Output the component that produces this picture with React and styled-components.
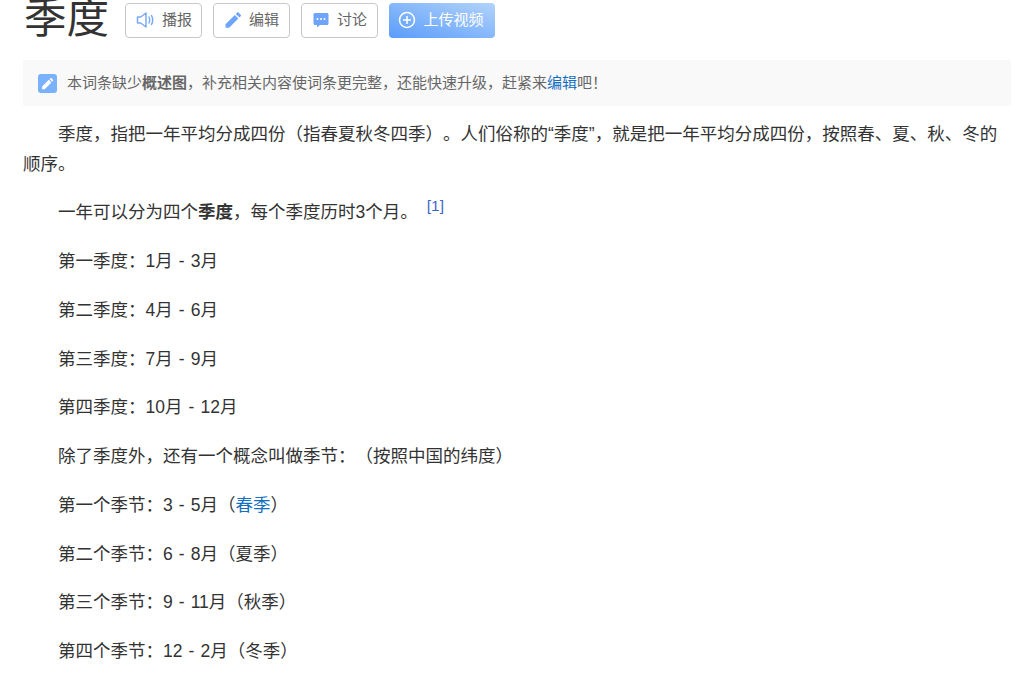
import styled, { createGlobalStyle } from "styled-components"

const GlobalStyle = createGlobalStyle`
  html, body {
    margin: 0;
    background: #fff;
    overflow: hidden;
  }
  body {
    font-family: "Liberation Sans", "Noto Sans CJK SC", sans-serif;
    color: #333;
    text-spacing-trim: space-all;
  }
`

const SpeakerIcon = () => (
  <svg width="20" height="20" viewBox="0 0 20 20" fill="none" stroke="#7aa9f5" strokeWidth="1.5">
    <path d="M2.5 7h3.2L11 3v14l-5.300-4H2.500z" strokeLinejoin="round" />
    <path d="M14 7c1 1.800 1 4.200 0 6" strokeLinecap="round" />
    <path d="M16.500 5.500c1.500 2.800 1.500 6.200 0 9" strokeLinecap="round" />
  </svg>
)

const PencilIcon = ({ color = "#6ea4fa" }) => (
  <svg width="18" height="18" viewBox="0 0 18 18" fill={color}>
    <path d="M1.500 13.200 10.800 3.900l3.600 3.600-9.300 9.300H1.500z" />
    <path d="M11.800 2.900l1.300-1.300c.4-.4 1-.4 1.400 0l2.200 2.200c.4.400.4 1 0 1.400l-1.300 1.300z" />
  </svg>
)

const ChatIcon = () => (
  <svg width="18" height="18" viewBox="0 0 18 18">
    <path d="M3 2h12c.9 0 1.500.6 1.500 1.500v9c0 .9-.6 1.500-1.500 1.500H8l-3 2.500V14H3c-.9 0-1.500-.6-1.500-1.500v-9C1.500 2.600 2.100 2 3 2z" fill="#6ea4fa" />
    <circle cx="5.500" cy="8" r="1" fill="#fff" />
    <circle cx="9" cy="8" r="1" fill="#fff" />
    <circle cx="12.500" cy="8" r="1" fill="#fff" />
  </svg>
)

const PlusCircleIcon = () => (
  <svg width="18" height="18" viewBox="0 0 18 18" fill="none" stroke="#fff" strokeWidth="1.500">
    <circle cx="9" cy="9" r="7.500" />
    <path d="M5 9h8M9 5v8" />
  </svg>
)

const actions = [
  { label: "播报", icon: <SpeakerIcon /> },
  { label: "编辑", icon: <PencilIcon /> },
  { label: "讨论", icon: <ChatIcon /> },
]

const seasons = [
  "第一季度：1月 - 3月",
  "第二季度：4月 - 6月",
  "第三季度：7月 - 9月",
  "第四季度：10月 - 12月",
  "除了季度外，还有一个概念叫做季节：（按照中国的纬度）",
]

export default function App() {
  return (
    <Page lang="zh-CN">
      <GlobalStyle />
      <TitleRow>
        <Title>季度</Title>
        <Actions>
          {actions.map((item) => (
            <ActionButton key={item.label}>
              {item.icon}
              <ButtonLabel>{item.label}</ButtonLabel>
            </ActionButton>
          ))}
          <UploadButton>
            <PlusCircleIcon />
            <ButtonLabel>上传视频</ButtonLabel>
          </UploadButton>
        </Actions>
      </TitleRow>

      <Notice>
        <NoticeIcon>
          <PencilIcon color="#fff" />
        </NoticeIcon>
        <NoticeText>
          本词条缺少<b>概述图</b>，补充相关内容使词条更完整，还能快速升级，赶紧来<a>编辑</a>吧！
        </NoticeText>
      </Notice>

      <Para>
        季度，指把一年平均分成四份（指春夏秋冬四季）。人们俗称的“季度”，就是把一年平均分成四份，按照春、夏、秋、冬的顺序。
      </Para>
      <Para>
        一年可以分为四个<b>季度</b>，每个季度历时3个月。<Ref>[1]</Ref>
      </Para>
      {seasons.map((text) => (
        <Para key={text}>{text}</Para>
      ))}
      <Para>
        第一个季节：3 - 5月（<a>春季</a>）
      </Para>
      <Para>第二个季节：6 - 8月（夏季）</Para>
      <Para>第三个季节：9 - 11月（秋季）</Para>
      <Para>第四个季节：12 - 2月（冬季）</Para>
    </Page>
  )
}

const Page = styled.div`
  width: 988px;
  padding-left: 23px;

  a {
    color: #136ec2;
    text-decoration: none;
  }
`

const TitleRow = styled.div`
  display: flex;
  align-items: flex-start;
  height: 60px;
`

const Title = styled.h1`
  margin: 0 16px 0 0;
  width: 86px;
  padding-left: 1px;
  box-sizing: border-box;
  font-size: 42.5px;
  font-weight: 400;
  line-height: 38px;
  color: #333;
`

const Actions = styled.div`
  display: flex;
  gap: 11px;
  padding-top: 3px;
`

const ButtonLabel = styled.span`
  margin-top: -5px;
`

const ActionButton = styled.div`
  box-sizing: border-box;
  display: flex;
  align-items: center;
  justify-content: center;
  gap: 7px;
  width: 77px;
  height: 35px;
  border: 1px solid #c8c8c8;
  border-radius: 4px;
  font-size: 15px;
  color: #666;

  svg {
    margin-top: -2px;
  }
`

const UploadButton = styled(ActionButton)`
  width: 106px;
  padding-right: 2px;
  border: 0;
  color: #fff;
  background: linear-gradient(to top right, #5a9cfa, #b2d3fb);
`

const Notice = styled.div`
  display: flex;
  align-items: center;
  gap: 10px;
  height: 46px;
  padding-left: 15px;
  background: #f9f9f9;
  font-size: 15px;
  color: #666;
  margin-bottom: 12.5px;
`

const NoticeText = styled.span`
  margin-top: -3px;
`

const NoticeIcon = styled.div`
  display: flex;
  align-items: center;
  justify-content: center;
  width: 19px;
  height: 19px;
  border-radius: 3px;
  background: #7ab1fb;

  svg {
    width: 13px;
    height: 13px;
  }
`

const Para = styled.p`
  margin: 0 0 18.75px;
  font-size: 17.5px;
  line-height: 30px;
  text-indent: 35px;
  word-spacing: 1.2px;
  color: #333;
`

const Ref = styled.sup`
  margin-left: 9px;
  font-size: 15.5px;
  line-height: 0;
  color: #3f68c9;
`
